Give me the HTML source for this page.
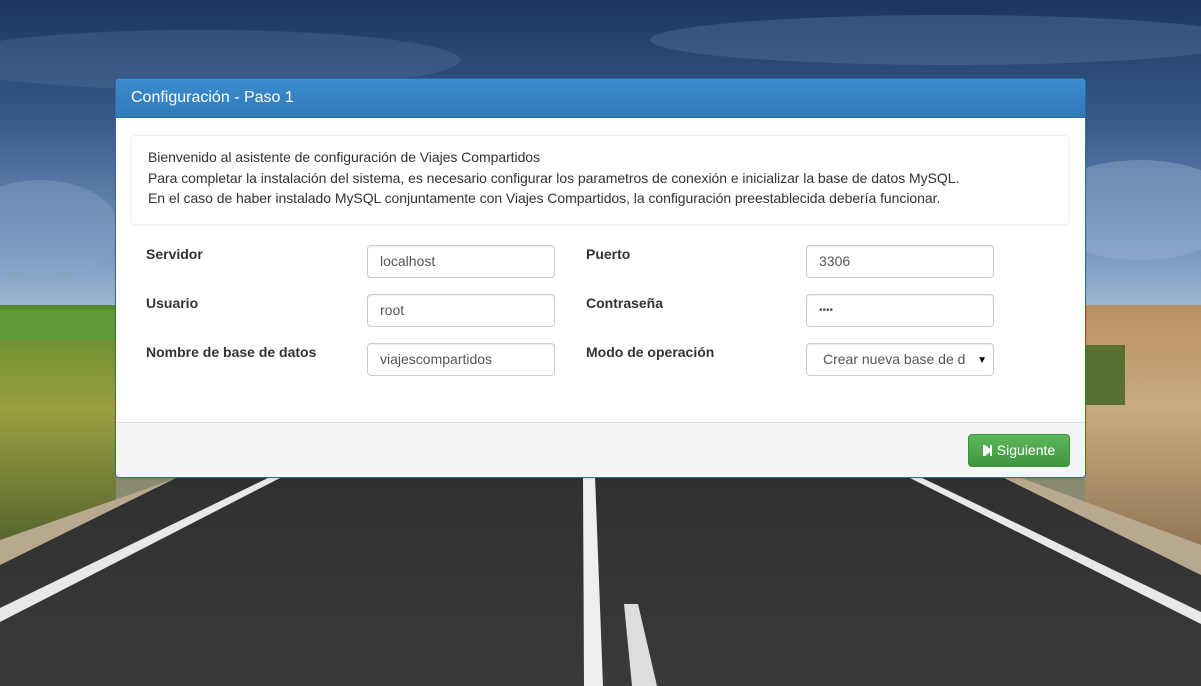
<!DOCTYPE html>
<html><head><meta charset="utf-8"><style>
html,body{margin:0;padding:0;width:1201px;height:686px;overflow:hidden;font-family:"Liberation Sans",Arial,sans-serif;}
#bg{position:absolute;left:0;top:0}
.panel{position:absolute;left:115px;top:78px;width:969px;height:398px;background:#fff;border:1px solid #2e6da4;border-radius:4px;box-shadow:0 1px 2px rgba(0,0,0,.1);overflow:hidden}
.hd{height:38px;background:linear-gradient(#3c8dcf,#2f79b9);color:#fff;font-size:16px;line-height:38px;padding-left:15px;border-bottom:1px solid #2e6da4}
.well{position:absolute;left:15px;top:56px;width:938px;height:90px;background:#fff;border:1px solid #f0f0f0;border-radius:4px;box-shadow:0 1px 2px rgba(0,0,0,.04);font-size:14px;color:#333;line-height:20.5px;box-sizing:border-box;padding:11px 0 0 16px;letter-spacing:-0.05px}
.lbl{position:absolute;font-size:14px;font-weight:bold;color:#333}
.inp{position:absolute;width:188px;height:33px;border:1px solid #ccc;border-radius:4px;box-sizing:border-box;font-size:14px;color:#555;line-height:31px;padding-left:12px;box-shadow:inset 0 1px 1px rgba(0,0,0,.075)}
.ft{position:absolute;left:0;top:343px;width:969px;height:55px;background:#f5f5f5;border-top:1px solid #ddd}
.btn{position:absolute;left:852px;top:11px;width:102px;height:33px;box-sizing:border-box;background:linear-gradient(#5cb85c,#419641);border:1px solid #3e8f3e;border-radius:4px;color:#fff;font-size:14px;line-height:31px;text-align:center}
</style></head><body>
<svg id="bg" width="1201" height="686" viewBox="0 0 1201 686">
<defs>
<linearGradient id="sky" x1="0" y1="0" x2="0" y2="1"><stop offset="0" stop-color="#1c3560"/><stop offset=".4" stop-color="#3a5d8e"/><stop offset=".8" stop-color="#7b9ac0"/><stop offset="1" stop-color="#a8bfd6"/></linearGradient>
<linearGradient id="road" x1="0" y1="0" x2="0" y2="1"><stop offset="0" stop-color="#303030"/><stop offset="1" stop-color="#3a3a3a"/></linearGradient>
<linearGradient id="lf" x1="0" y1="0" x2="0" y2="1"><stop offset="0" stop-color="#5a8a2a"/><stop offset=".4" stop-color="#9aa040"/><stop offset="1" stop-color="#4a5a2a"/></linearGradient>
<linearGradient id="rf" x1="0" y1="0" x2="0" y2="1"><stop offset="0" stop-color="#b89060"/><stop offset=".4" stop-color="#c8ab80"/><stop offset="1" stop-color="#8a7050"/></linearGradient>
</defs>
<rect width="1201" height="686" fill="#8a8a70"/>
<rect width="1201" height="320" fill="url(#sky)"/>
<ellipse cx="200" cy="60" rx="260" ry="30" fill="#5d7ba5" opacity=".3"/>
<ellipse cx="950" cy="40" rx="300" ry="25" fill="#6a87b0" opacity=".3"/>
<ellipse cx="1140" cy="210" rx="100" ry="50" fill="#9db4cf" opacity=".4"/>
<ellipse cx="40" cy="230" rx="80" ry="50" fill="#8aa5c5" opacity=".4"/>
<rect x="0" y="305" width="116" height="260" fill="url(#lf)"/>
<rect x="0" y="310" width="116" height="30" fill="#5e9a35"/>
<rect x="1085" y="305" width="116" height="260" fill="url(#rf)"/>
<rect x="1085" y="345" width="40" height="60" fill="#5a7030"/>
<polygon points="0,540 200,470 1000,470 1201,545 1201,686 0,686" fill="#b8a890"/>
<polygon points="0,565 180,476 1000,476 1201,575 1201,686 0,686" fill="url(#road)"/>
<polygon points="272,476 284,476 0,622 0,608" fill="#e8e8e8"/>
<polygon points="583,476 595,476 603,686 584,686" fill="#eee"/>
<polygon points="624,604 638,604 657,686 632,686" fill="#ddd"/>
<polygon points="906,476 918,476 1201,612 1201,624" fill="#e8e8e8"/>
</svg>
<div class="panel">
<div class="hd">Configuración - Paso 1</div>
<div class="well">Bienvenido al asistente de configuración de Viajes Compartidos<br>Para completar la instalación del sistema, es necesario configurar los parametros de conexión e inicializar la base de datos MySQL.<br>En el caso de haber instalado MySQL conjuntamente con Viajes Compartidos, la configuración preestablecida debería funcionar.</div>
<div class="lbl" style="left:30px;top:167px">Servidor</div>
<div class="inp" style="left:251px;top:166px">localhost</div>
<div class="lbl" style="left:470px;top:167px">Puerto</div>
<div class="inp" style="left:690px;top:166px">3306</div>
<div class="lbl" style="left:30px;top:216px">Usuario</div>
<div class="inp" style="left:251px;top:215px">root</div>
<div class="lbl" style="left:470px;top:216px">Contraseña</div>
<div class="inp" style="left:690px;top:215px;font-size:10px">••••</div>
<div class="lbl" style="left:30px;top:265px">Nombre de base de datos</div>
<div class="inp" style="left:251px;top:264px">viajescompartidos</div>
<div class="lbl" style="left:470px;top:265px">Modo de operación</div>
<div class="inp" style="left:690px;top:264px;padding-left:16px">Crear nueva base de d<span style="position:absolute;right:6px;top:1px;font-size:10px;color:#000">▼</span></div>
<div class="ft"><div class="btn"><svg width="9" height="11" viewBox="0 0 9 11" style="vertical-align:-1px;margin-right:5px"><rect x="0" y="0" width="2" height="11" fill="#fff"/><polygon points="2,0 9,5.5 2,11" fill="#fff"/><rect x="7" y="0" width="2" height="11" fill="#fff"/></svg>Siguiente</div></div>
</div>
</body></html>
